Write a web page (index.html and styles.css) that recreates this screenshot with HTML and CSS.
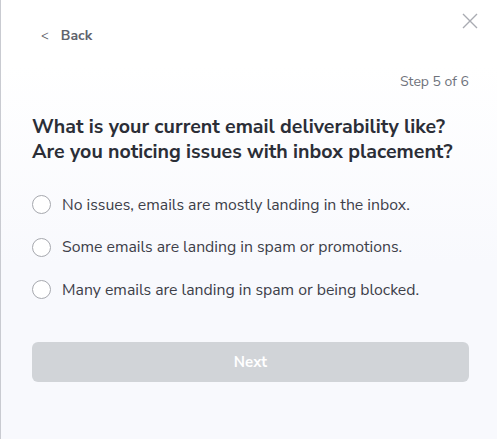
FILE: index.html
```html
<!DOCTYPE html>
<html>
<head>
<meta charset="utf-8">
<link rel="stylesheet" href="styles.css">
</head>
<body>
<div class="modal">
  <button class="close" aria-label="Close">
    <svg width="16" height="16" viewBox="0 0 16 16"><path d="M1 1L15 15M15 1L1 15" stroke="#a9abb2" stroke-width="1.4" fill="none"/></svg>
  </button>
  <div class="top">
    <a class="back"><span class="chev">&lt;</span><span>Back</span></a>
  </div>
  <div class="step">Step 5 of 6</div>
  <h1 class="question">What is your current email deliverability like?<br>Are you noticing issues with inbox placement?</h1>
  <div class="options">
    <label class="option"><span class="radio"></span><span>No issues, emails are mostly landing in the inbox.</span></label>
    <label class="option"><span class="radio"></span><span>Some emails are landing in spam or promotions.</span></label>
    <label class="option"><span class="radio"></span><span>Many emails are landing in spam or being blocked.</span></label>
  </div>
  <button class="next">Next</button>
</div>
</body>
</html>
```
FILE: styles.css
```css
html, body { margin: 0; padding: 0; }
body {
  width: 497px;
  height: 439px;
  overflow: hidden;
  font-family: "Nunito Sans", Lato, "Noto Sans", sans-serif;
}
.modal {
  position: relative;
  box-sizing: border-box;
  width: 497px;
  height: 439px;
  border-left: 1px solid #c9cbd1;
  background: linear-gradient(to bottom, #ffffff 0%, #ffffff 15%, #f8f9fd 60%, #f8f9fd 100%);
  padding: 0 28px 0 31px;
  display: flex;
  flex-direction: column;
}
.close {
  position: absolute;
  top: 13px;
  right: 19px;
  border: 0;
  background: none;
  padding: 0;
  width: 16px;
  height: 16px;
  line-height: 0;
}
.top { padding-top: 26px; height: 20px; }
.back {
  display: flex;
  align-items: center;
  gap: 12px;
  color: #5f636c;
  font-size: 14px;
  font-weight: 700;
  padding-left: 9px;
}
.chev { font-weight: 400; font-size: 13px; }
.step {
  margin-top: 26px;
  text-align: right;
  font-size: 14px;
  color: #6e727b;
}
.question {
  margin: 23px 0 0 0;
  font-size: 19.6px;
  line-height: 25px;
  font-weight: 700;
  color: #2b2e37;
}
.options {
  margin-top: 30px;
  display: flex;
  flex-direction: column;
  gap: 21.5px;
}
.option {
  display: flex;
  align-items: center;
  gap: 11px;
  font-size: 15.8px;
  color: #3d4049;
  height: 21px;
}
.radio {
  box-sizing: border-box;
  width: 19px;
  height: 19px;
  border: 1.5px solid #a6a8ae;
  border-radius: 50%;
  background: #fff;
  flex: none;
}
.next {
  margin-top: 42px;
  height: 40px;
  border: 0;
  border-radius: 6px;
  background: #d1d4d8;
  color: #ffffff;
  font-family: inherit;
  font-size: 15px;
  font-weight: 700;
}
```
